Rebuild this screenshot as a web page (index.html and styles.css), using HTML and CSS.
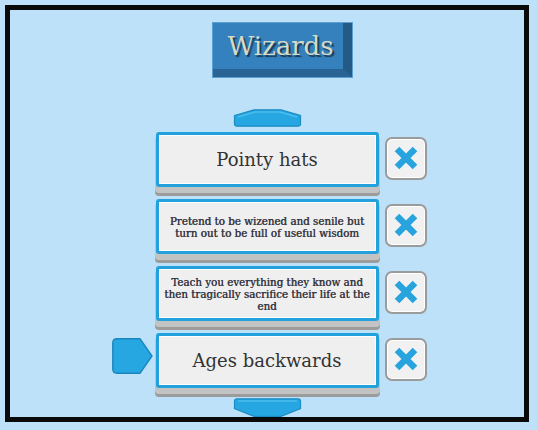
FILE: index.html
```html
<!DOCTYPE html>
<html lang="en">
<head>
    <meta charset="UTF-8">
    <meta name="viewport" content="width=device-width, initial-scale=1.0">
    <title>Wizards</title>
    <link rel="stylesheet" href="styles.css">
</head>
<body>
    <div class="frame">
        <div class="title">Wizards</div>

        <svg class="arrow arrow-up" width="69" height="18" viewBox="0 0 69 18">
            <path d="M1.5,6.5 L21,0.8 H48 L67.5,6.5 V15 Q67.5,17.2 65,17.2 H4 Q1.5,17.2 1.5,15 Z" fill="#27a7e1" stroke="#1c8cc4" stroke-width="1.2"/>
            <path d="M5,8 L22,3 H47 L64,8" fill="none" stroke="#4cbdef" stroke-width="1.5"/>
        </svg>

        <div class="list">
            <div class="row">
                <div class="card big">Pointy hats</div>
                <button class="remove">
                    <svg width="26" height="24" viewBox="0 0 26 24"><path d="M4,3 L22,21 M22,3 L4,21" stroke="#27a3de" stroke-width="6.5"/></svg>
                </button>
            </div>
            <div class="row">
                <div class="card small">Pretend to be wizened and senile but turn out to be full of useful wisdom</div>
                <button class="remove">
                    <svg width="26" height="24" viewBox="0 0 26 24"><path d="M4,3 L22,21 M22,3 L4,21" stroke="#27a3de" stroke-width="6.5"/></svg>
                </button>
            </div>
            <div class="row">
                <div class="card small">Teach you everything they know and then tragically sacrifice their life at the end</div>
                <button class="remove">
                    <svg width="26" height="24" viewBox="0 0 26 24"><path d="M4,3 L22,21 M22,3 L4,21" stroke="#27a3de" stroke-width="6.5"/></svg>
                </button>
            </div>
            <div class="row">
                <svg class="pointer" width="41" height="36" viewBox="0 0 41 36">
                    <path d="M5,0.8 H28 L40,18 L28,35.2 H5 Q0.8,35.2 0.8,31 V5 Q0.8,0.8 5,0.8 Z" fill="#27a7e1" stroke="#1a86bf" stroke-width="1.4"/>
                </svg>
                <div class="card big">Ages backwards</div>
                <button class="remove">
                    <svg width="26" height="24" viewBox="0 0 26 24"><path d="M4,3 L22,21 M22,3 L4,21" stroke="#27a3de" stroke-width="6.5"/></svg>
                </button>
            </div>
        </div>

        <svg class="arrow arrow-down" width="69" height="19" viewBox="0 0 69 19">
            <path d="M1.5,3 Q1.5,0.8 4,0.8 H65 Q67.5,0.8 67.5,3 V10.5 L48,18.3 H21 L1.5,10.5 Z" fill="#27a7e1" stroke="#1c8cc4" stroke-width="1.2"/>
            <path d="M5,3 H64" fill="none" stroke="#4cbdef" stroke-width="1.5"/>
        </svg>
    </div>
</body>
</html>
```

FILE: styles.css
```css
body {
    margin: 0;
    background-color: #bde1f8;
    font-family: "DejaVu Serif", Georgia, serif;
}
.frame {
    box-sizing: border-box;
    width: 524px;
    height: 417px;
    margin: 5px;
    border: 5px solid #0a0a0a;
    background-color: #bde1f8;
    display: flex;
    flex-direction: column;
    align-items: center;
    overflow: hidden;
}
.title {
    box-sizing: border-box;
    width: 139px;
    height: 54px;
    margin-top: 13px;
    margin-left: 30px;
    padding-left: 6px;
    background-color: #3481bd;
    border-right: 9px solid #235a86;
    border-bottom: 8px solid #2a6494;
    outline: 1px solid #5d9fd0;
    display: flex;
    align-items: center;
    justify-content: center;
    color: #d6dac6;
    font-size: 26px;
    text-shadow: 2px 2px 1px #1b3a52;
}
.arrow {
    display: block;
}
.arrow-up {
    margin-top: 32px;
}
.arrow-down {
    margin-top: 10px;
}
.list {
    margin-top: 5px;
    display: flex;
    flex-direction: column;
    gap: 12px;
}
.row {
    display: grid;
    grid-template-columns: 48px 223px 48px;
    align-items: center;
}
.card {
    grid-column: 2;
    box-sizing: border-box;
    height: 55px;
    padding: 0 4px;
    border: 3px solid #23a1dd;
    border-radius: 3px;
    background-color: #efefef;
    box-shadow: inset 0 0 0 1px #ffffff, 0 5px 0 1px #c3c3c3, 0 8px 0 1px #9c9c9c;
    display: flex;
    align-items: center;
    justify-content: center;
    text-align: center;
    color: #333;
}
.card.big {
    font-size: 18px;
}
.card.small {
    font-size: 10.3px;
    line-height: 12px;
    color: #383844;
    text-shadow: 0.4px 0 0 #383844;
}
.remove {
    grid-column: 3;
    justify-self: end;
    box-sizing: border-box;
    width: 42px;
    height: 43px;
    padding: 0;
    border: 2px solid #9b9b9b;
    border-radius: 7px;
    background-color: #f1f1f1;
    box-shadow: inset 0 0 0 1px #ffffff;
    display: flex;
    align-items: center;
    justify-content: center;
    margin-top: -3px;
}
.pointer {
    grid-column: 1;
    grid-row: 1;
    justify-self: end;
    margin-right: 3px;
    margin-top: -10px;
}
```
